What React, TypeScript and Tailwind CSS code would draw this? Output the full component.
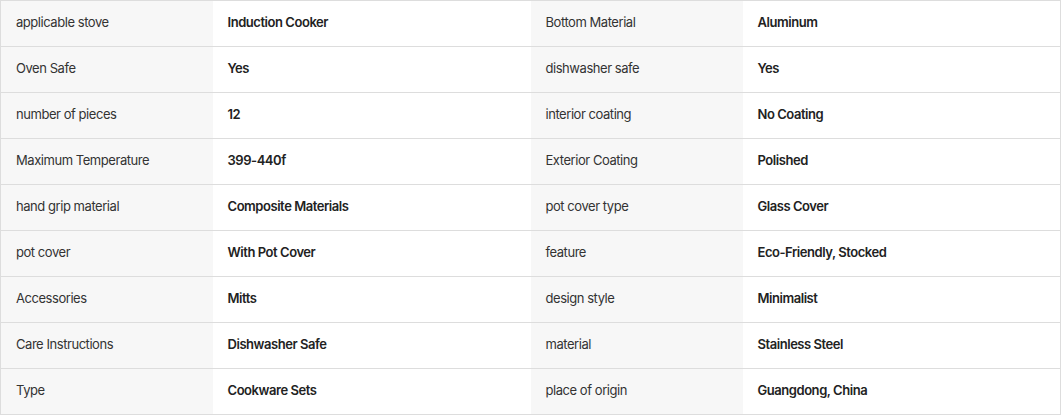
const rows: [string, string, string, string][] = [
  ["applicable stove", "Induction Cooker", "Bottom Material", "Aluminum"],
  ["Oven Safe", "Yes", "dishwasher safe", "Yes"],
  ["number of pieces", "12", "interior coating", "No Coating"],
  ["Maximum Temperature", "399-440f", "Exterior Coating", "Polished"],
  ["hand grip material", "Composite Materials", "pot cover type", "Glass Cover"],
  ["pot cover", "With Pot Cover", "feature", "Eco-Friendly, Stocked"],
  ["Accessories", "Mitts", "design style", "Minimalist"],
  ["Care Instructions", "Dishwasher Safe", "material", "Stainless Steel"],
  ["Type", "Cookware Sets", "place of origin", "Guangdong, China"],
];

export default function App() {
  return (
    <div className="w-[1061px] bg-white font-['Inter',sans-serif] text-[13px] tracking-[-0.45px]">
      <table className="w-full table-fixed border-collapse border border-[#dddddd]">
        <colgroup>
          <col className="w-[20%]" />
          <col className="w-[30%]" />
          <col className="w-[20%]" />
          <col className="w-[30%]" />
        </colgroup>
        <tbody>
          {rows.map((r) => (
            <tr key={r[0]} className="h-[46px] border-b border-[#dddddd]">
              <td className="bg-[#f7f7f7] px-[15px] pb-[2px] text-[#333333]">{r[0]}</td>
              <td className="px-[15px] pb-[2px] font-semibold text-[#222222]">{r[1]}</td>
              <td className="bg-[#f7f7f7] px-[15px] pb-[2px] text-[#333333]">{r[2]}</td>
              <td className="px-[15px] pb-[2px] font-semibold text-[#222222]">{r[3]}</td>
            </tr>
          ))}
        </tbody>
      </table>
    </div>
  );
}
